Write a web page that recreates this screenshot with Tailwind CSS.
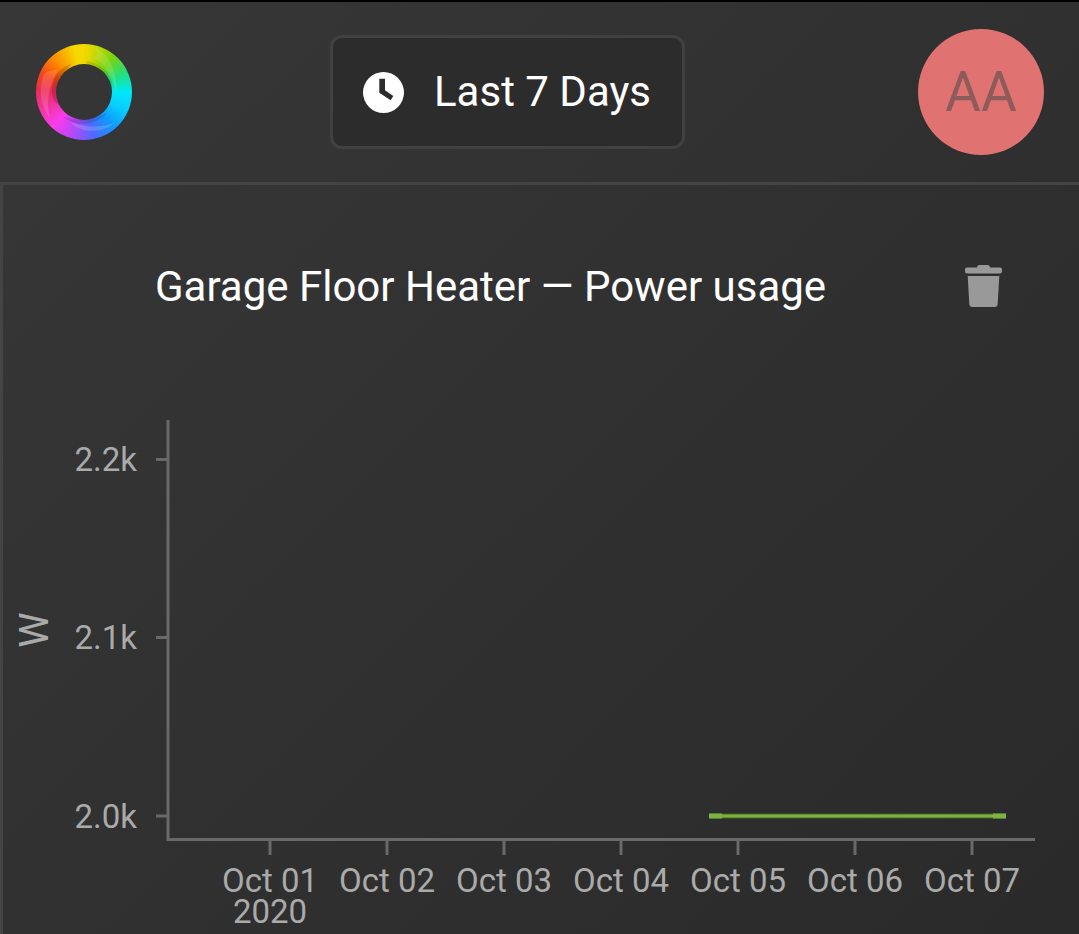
<!DOCTYPE html>
<html lang="en">
<head>
  <meta charset="UTF-8" />
  <meta name="viewport" content="width=device-width, initial-scale=1.0" />
  <title>Power usage</title>
  <script src="https://cdn.jsdelivr.net/npm/@tailwindcss/browser@4"></script>
</head>
<body class="w-[1079px] h-[934px] overflow-hidden bg-[#303030] text-white font-['Roboto',sans-serif]">
  <div class="w-full h-[934px] flex flex-col border-t-2 border-black bg-[linear-gradient(135deg,#373737,#2a2a2a)]">

    <!-- Header -->
    <header class="h-[180px] shrink-0 flex items-center pl-[36px] pr-[35px]">
      <div class="relative w-[96px] h-[96px] shrink-0 rounded-full bg-[conic-gradient(#f5d800_-12deg,#e8d800_6deg,#78d410_40deg,#20e080_66deg,#00e8f8_90deg,#08d0ff_112deg,#1098ff_140deg,#5068ff_168deg,#b848f8_196deg,#fa3cec_222deg,#f03498_250deg,#ea2c50_274deg,#f44818_294deg,#ff8800_316deg,#f5d800_348deg)] flex items-center justify-center">
        <svg class="absolute inset-0 w-[96px] h-[96px]" viewBox="0 0 96 96">
          <!-- swirl highlights on the ring -->
          <path d="M58 3C72 10 82 26 80 48 78 34 70 20 58 14 62 12 62 7 58 3z" fill="#ffffff" fill-opacity=".12" />
          <path d="M8 30C2 44 4 62 14 74 10 60 12 42 22 26 16 26 11 27 8 30z" fill="#ffffff" fill-opacity=".14" />
          <path d="M34 78C46 90 66 90 80 78 68 84 50 84 34 78z" fill="#ffffff" fill-opacity=".16" />
          <path d="M16 44C18 30 26 22 36 20 26 28 20 44 24 62 18 58 15 52 16 44z" fill="#000000" fill-opacity=".16" />
          <path d="M26 72C40 84 60 82 72 68 60 76 42 78 26 72z" fill="#000000" fill-opacity=".12" />
          <path d="M50 17C64 18 76 30 77 44 70 32 62 24 50 20z" fill="#000000" fill-opacity=".1" />
        </svg>
        <div class="relative w-[56px] h-[56px] rounded-full bg-[#353535]"></div>
      </div>
      <button class="ml-[198px] w-[355px] h-[114px] shrink-0 flex items-center rounded-[12px] border-[3px] border-[#414141] bg-[#2c2c2c] pl-[30px]">
        <svg class="w-[41px] h-[41px] shrink-0" viewBox="0 0 41 41">
          <circle cx="20.500" cy="20.500" r="20.500" fill="#fff" />
          <path d="M16.300 6.700H22V18.300L30.300 24 27.700 28.300 16.300 20.700z" fill="#2c2c2c" />
        </svg>
        <span class="ml-[30px] text-[42px] leading-none text-white">Last 7 Days</span>
      </button>
      <div class="ml-auto w-[126px] h-[126px] shrink-0 rounded-full bg-[#e07272] flex items-center justify-center text-[55px] leading-none text-[#8e5b5b]">AA</div>
    </header>

    <!-- Card -->
    <section class="flex-1 border-t-[3px] border-l-[3px] border-[#444444]">
      <div class="flex items-center justify-between h-[204px] pl-[152px] pr-[77px]">
        <h2 class="text-[42px] leading-none font-normal text-white">Garage Floor Heater — Power usage</h2>
        <svg class="w-[37px] h-[42px] shrink-0 mt-[-3px]" viewBox="0 0 37 42">
          <path d="M12 2.500C12 1 13 0 14.500 0h8C24 0 25 1 25 2.500h10c1.200 0 2 .8 2 2v2c0 1-.8 2-2 2H2c-1.200 0-2-1-2-2v-2c0-1.200.8-2 2-2z" fill="#999999" />
          <path d="M2.700 11H34.300L32.700 39c-.1 1.800-1.200 3-3 3H7.300c-1.800 0-2.900-1.200-3-3z" fill="#999999" />
        </svg>
      </div>

      <!-- Chart -->
      <svg class="block w-[1076px] h-[545px]" viewBox="0 389 1076 545" font-family="Roboto, sans-serif">
        <g fill="none" stroke="#696969" stroke-width="3">
          <path d="M165 420V839.500H1032" />
          <path d="M153 459.500h12M153 637.500h12M153 816h12" />
          <path d="M267 840v15M384 840v15M501 840v15M618 840v15M735 840v15M852 840v15M969 840v15" />
        </g>
        <path d="M706 816H1003" stroke="#46621f" stroke-width="5" />
        <path d="M706 816H1003" stroke="#7cb342" stroke-width="3" />
        <path d="M706 816H719M990 816H1003" stroke="#7cb342" stroke-width="5" />
        <g fill="#aaaaaa" font-size="33">
          <g text-anchor="end">
            <text x="134" y="471">2.2k</text>
            <text x="134" y="649">2.1k</text>
            <text x="134" y="828">2.0k</text>
          </g>
          <g text-anchor="middle">
            <text x="267" y="892">Oct 01</text>
            <text x="267" y="923">2020</text>
            <text x="384" y="892">Oct 02</text>
            <text x="501" y="892">Oct 03</text>
            <text x="618" y="892">Oct 04</text>
            <text x="735" y="892">Oct 05</text>
            <text x="852" y="892">Oct 06</text>
            <text x="969" y="892">Oct 07</text>
            <text font-size="40" transform="translate(44.500 630) rotate(-90)">W</text>
          </g>
        </g>
      </svg>
    </section>
  </div>
</body>
</html>
